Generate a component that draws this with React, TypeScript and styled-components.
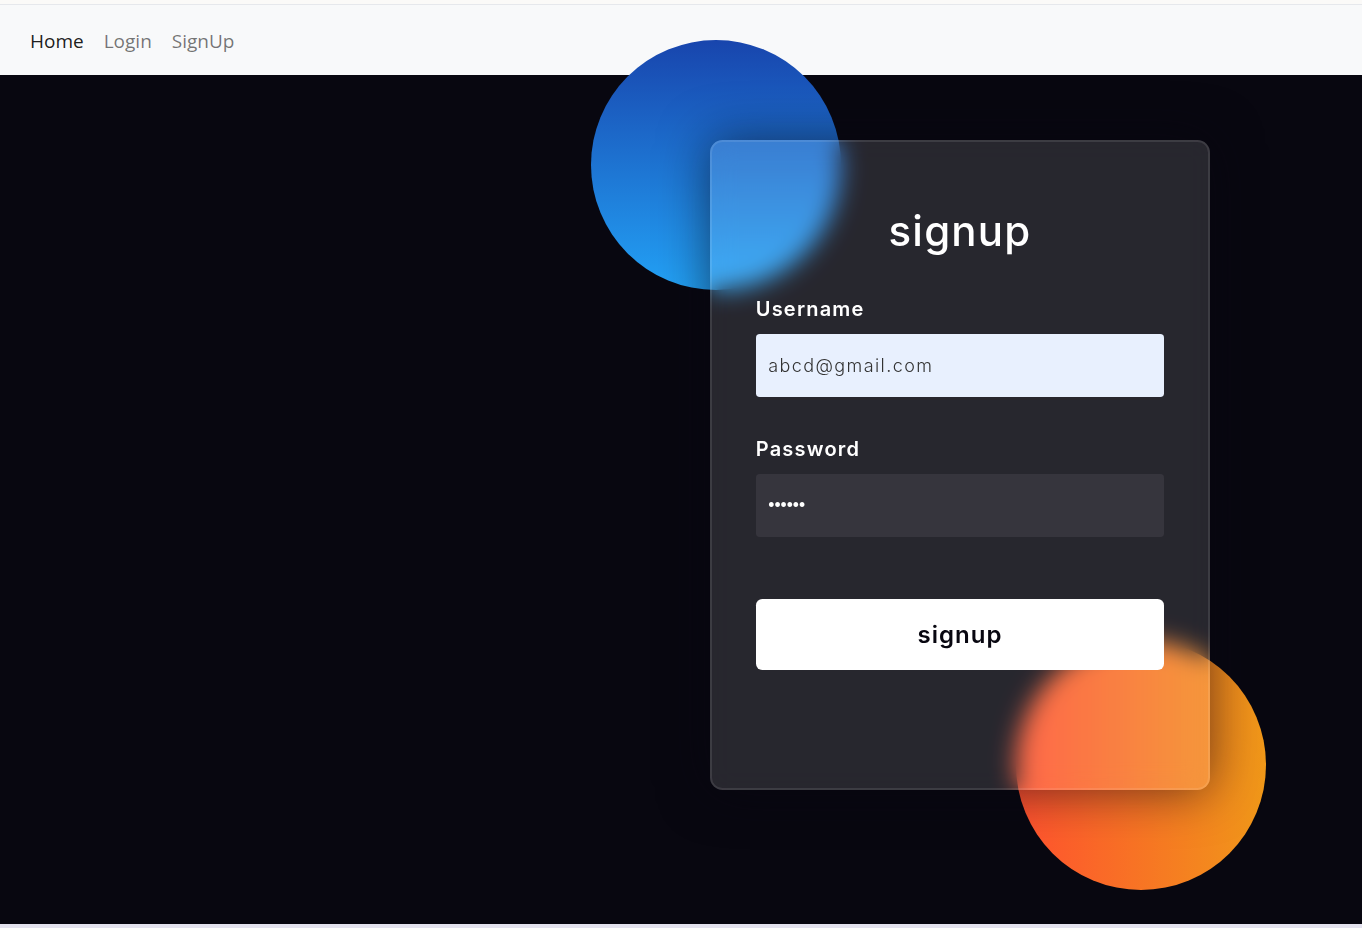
import { ReactElement } from 'react'
import styled, { createGlobalStyle } from 'styled-components'

const GlobalStyle = createGlobalStyle`
  html, body {
    margin: 0;
    padding: 0;
  }

  body {
    background: #e4e2ef;
    font-family: 'Noto Sans', 'Open Sans', sans-serif;
  }

  * {
    box-sizing: border-box;
  }
`

const Page = styled.div`
  display: flex;
  flex-direction: column;
  height: 928px;
  overflow: hidden;
`

const TopStrip = styled.div`
  height: 5px;
  flex: none;
  background: #fbfaf8;
  border-bottom: 1px solid #e6e8ec;
`

const Navbar = styled.nav`
  flex: none;
  height: 70px;
  display: flex;
  align-items: center;
  padding: 0 20px;
  background: #f8f9fa;
`

const NavLink = styled.a<{ $active?: boolean }>`
  padding: 2px 10px 0;
  font-family: 'Open Sans', 'Noto Sans', sans-serif;
  font-size: 19px;
  color: ${({ $active }) => ($active ? 'rgba(0, 0, 0, 0.9)' : 'rgba(0, 0, 0, 0.55)')};
  text-decoration: none;
  cursor: pointer;
`

const Stage = styled.main`
  flex: 1;
  position: relative;
  display: flex;
  align-items: flex-start;
  padding: 65px 0 0 691.25px;
  background: #080710;
`

const BottomStrip = styled.div`
  flex: none;
  height: 4px;
  background: #e4e2ef;
`

const Backdrop = styled.div`
  position: relative;
  width: 537.5px;
  height: 650px;
  display: flex;
  justify-content: center;
`

const Shape = styled.div<{ $variant: 'blue' | 'orange' }>`
  position: absolute;
  width: 250px;
  height: 250px;
  border-radius: 50%;
  ${({ $variant }) =>
    $variant === 'blue'
      ? `
    left: -100px;
    top: -100px;
    background: linear-gradient(#1845ad, #23a2f6);
  `
      : `
    right: -37.5px;
    bottom: -100px;
    background: linear-gradient(to right, #ff512f, #f09819);
  `}
`

const Card = styled.form`
  position: relative;
  width: 500px;
  height: 650px;
  padding: 62.5px 43.75px;
  border-radius: 12.5px;
  border: 2.5px solid rgba(255, 255, 255, 0.1);
  background: rgba(255, 255, 255, 0.13);
  backdrop-filter: blur(12.5px);
  box-shadow: 0 0 50px rgba(8, 7, 16, 0.6);
  font-family: 'Inter', 'Noto Sans', sans-serif;
  color: #ffffff;
`

const Title = styled.h3`
  margin: 0;
  font-size: 42px;
  font-weight: 500;
  line-height: 52.5px;
  letter-spacing: 1.2px;
  text-align: center;
`

const Label = styled.label`
  display: block;
  margin-top: 37.5px;
  font-size: 20px;
  font-weight: 600;
  line-height: 29.5px;
  letter-spacing: 1.2px;
`

const Field = styled.input<{ $filled?: boolean }>`
  display: block;
  width: 100%;
  height: 63px;
  margin-top: 10px;
  padding: 0 12.5px;
  border: none;
  border-radius: 3.75px;
  outline: none;
  background: ${({ $filled }) => ($filled ? '#e8f0fe' : 'rgba(255, 255, 255, 0.07)')};
  color: ${({ $filled }) => ($filled ? '#333333' : '#ffffff')};
  font-family: inherit;
  font-size: 18px;
  font-weight: 300;
  letter-spacing: 1.4px;

  &[type='password'] {
    font-family: 'Liberation Sans', sans-serif;
    font-size: 17.5px;
    letter-spacing: 0;
  }

  &::placeholder {
    color: #e5e5e5;
  }
`

const SubmitButton = styled.button`
  display: block;
  width: 100%;
  margin-top: 62px;
  padding: 18.75px 0;
  border: none;
  border-radius: 6.25px;
  background: #ffffff;
  color: #080710;
  font-family: inherit;
  font-size: 24px;
  font-weight: 600;
  line-height: 33.5px;
  letter-spacing: 1px;
  cursor: pointer;
`

function SignupForm(): ReactElement {
  return (
    <Backdrop>
      <Shape $variant="blue" />
      <Shape $variant="orange" />
      <Card onSubmit={(e) => e.preventDefault()}>
        <Title>signup</Title>

        <Label htmlFor="username">Username</Label>
        <Field
          $filled
          id="username"
          type="text"
          placeholder="Email or Phone"
          defaultValue="abcd@gmail.com"
        />

        <Label htmlFor="password">Password</Label>
        <Field
          id="password"
          type="password"
          placeholder="Password"
          defaultValue="123456"
        />

        <SubmitButton type="submit">signup</SubmitButton>
      </Card>
    </Backdrop>
  )
}

export default function App(): ReactElement {
  return (
    <>
      <GlobalStyle />
      <Page>
        <TopStrip />
        <Navbar>
          <NavLink $active>Home</NavLink>
          <NavLink>Login</NavLink>
          <NavLink>SignUp</NavLink>
        </Navbar>
        <Stage>
          <SignupForm />
        </Stage>
        <BottomStrip />
      </Page>
    </>
  )
}
